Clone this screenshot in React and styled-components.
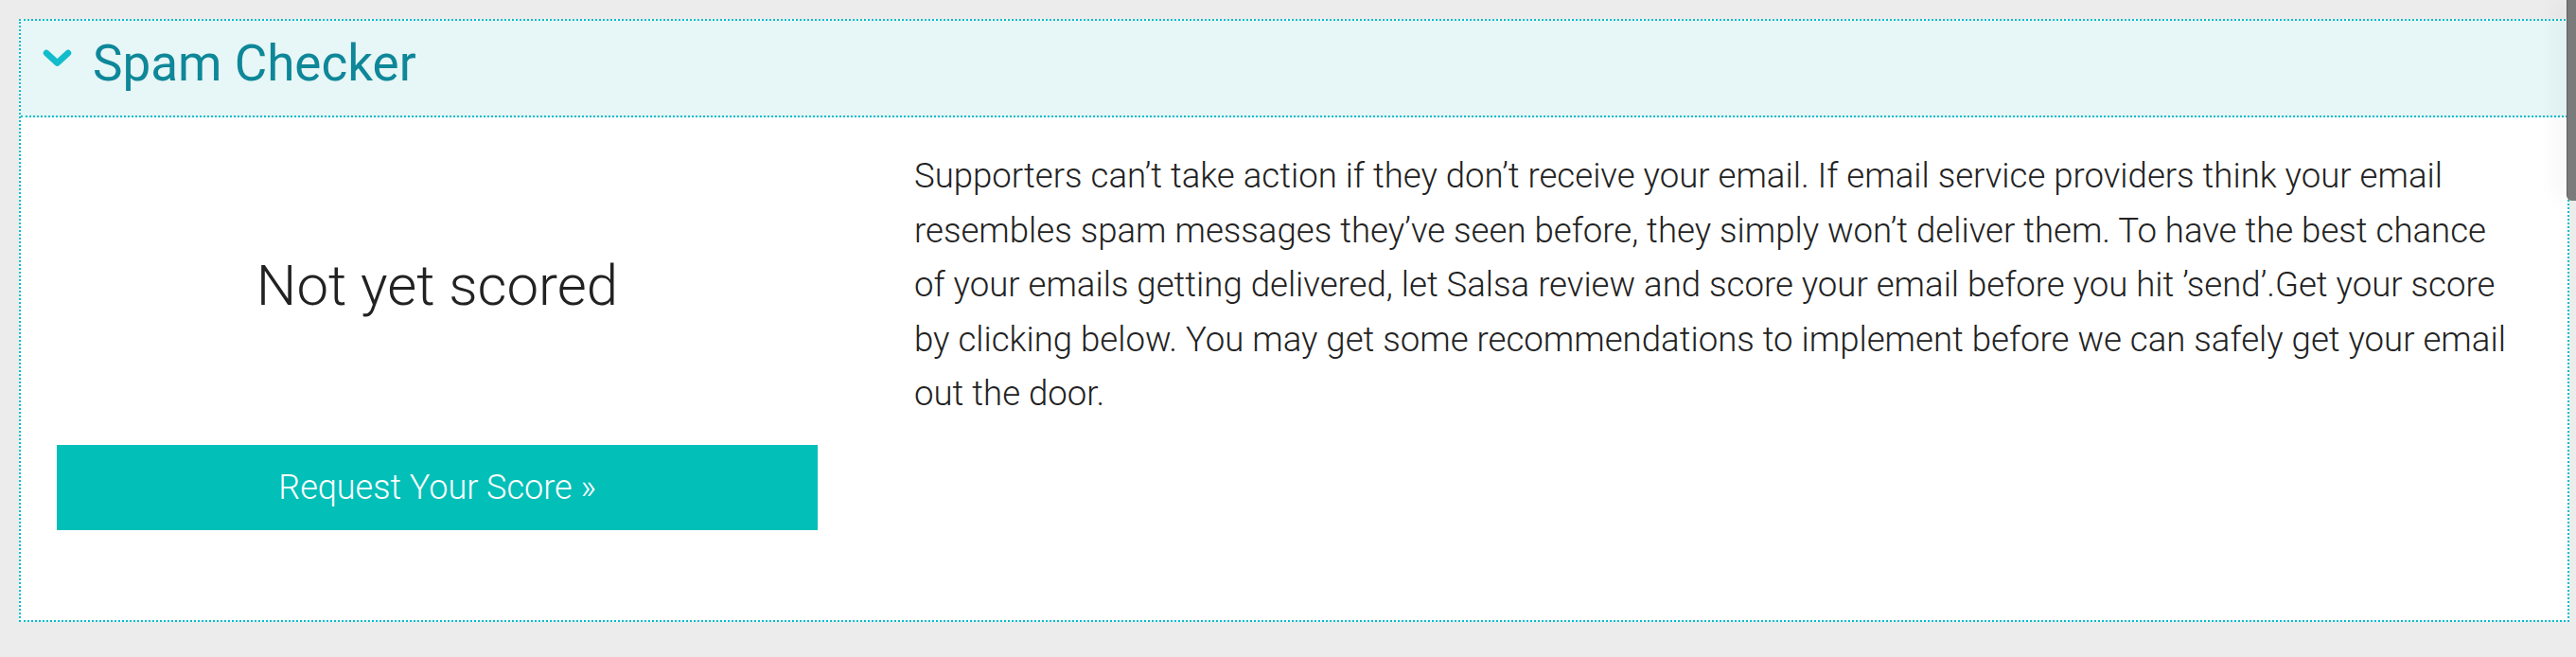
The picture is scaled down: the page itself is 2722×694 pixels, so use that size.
import React from "react";
import styled, { createGlobalStyle } from "styled-components";

const GlobalStyle = createGlobalStyle`
  html, body {
    margin: 0;
    padding: 0;
    background: #ececec;
    font-family: Roboto, "Liberation Sans", sans-serif;
  }
`;

const Page = styled.div`
  padding: 20px 7px 0 20px;
  height: 694px;
  box-sizing: border-box;
`;

const Panel = styled.section`
  border: 2px dotted #00bccb;
  background: #fff;
`;

const PanelHeader = styled.div`
  display: flex;
  align-items: center;
  gap: 22px;
  height: 102px;
  padding: 0 0 10px 23px;
  box-sizing: border-box;
  background: #e7f6f6;
  border-bottom: 2px dotted #00bccb;
`;

const Chevron = styled.svg`
  width: 31px;
  height: 18px;
  margin-bottom: 12px;
  flex-shrink: 0;
`;

const Title = styled.h2`
  margin: 0;
  font-size: 53px;
  font-weight: 400;
  line-height: normal;
  color: #0e8799;
`;

const PanelBody = styled.div`
  display: grid;
  grid-template-columns: 804px 1fr;
  column-gap: 102px;
  padding: 33px 52px 0 38px;
  height: 531px;
  box-sizing: border-box;
`;

const ScoreColumn = styled.div`
  display: flex;
  flex-direction: column;
  align-items: center;
  padding-top: 109px;
`;

const ScoreLabel = styled.div`
  font-size: 60px;
  font-weight: 300;
  line-height: 72px;
  color: #222;
  margin-bottom: 132px;
`;

const ScoreButton = styled.button`
  width: 100%;
  height: 90px;
  border: none;
  background: #02bfb8;
  color: #fff;
  font-family: inherit;
  font-size: 36px;
  font-weight: 300;
  cursor: pointer;
`;

const Copy = styled.p`
  margin: 0;
  font-size: 36.6px;
  font-weight: 300;
  line-height: 57.6px;
  color: #222;
`;

const ScrollThumb = styled.div`
  position: fixed;
  top: 0;
  right: 0;
  width: 9px;
  height: 212px;
  background: #7b7b7b;
  border-left: 1px solid #5f5f5f;
  border-bottom-left-radius: 6px;
  box-shadow: -12px 0 18px rgba(0, 0, 0, 0.05);
`;

export default function App() {
  return (
    <>
      <GlobalStyle />
      <Page>
        <Panel>
          <PanelHeader>
            <Chevron viewBox="0 0 31 18">
              <path
                d="M4 4 L15.5 14.5 L27 4"
                fill="none"
                stroke="#12bccb"
                strokeWidth="6.5"
                strokeLinecap="round"
                strokeLinejoin="round"
              />
            </Chevron>
            <Title>Spam Checker</Title>
          </PanelHeader>
          <PanelBody>
            <ScoreColumn>
              <ScoreLabel>Not yet scored</ScoreLabel>
              <ScoreButton>Request Your Score »</ScoreButton>
            </ScoreColumn>
            <Copy>
              Supporters can’t take action if they don’t receive your email. If
              email service providers think your email resembles spam messages
              they’ve seen before, they simply won’t deliver them. To have the
              best chance of your emails getting delivered, let Salsa review and
              score your email before you hit ’send’.Get your score by clicking
              below. You may get some recommendations to implement before we can
              safely get your email out the door.
            </Copy>
          </PanelBody>
        </Panel>
      </Page>
      <ScrollThumb />
    </>
  );
}
